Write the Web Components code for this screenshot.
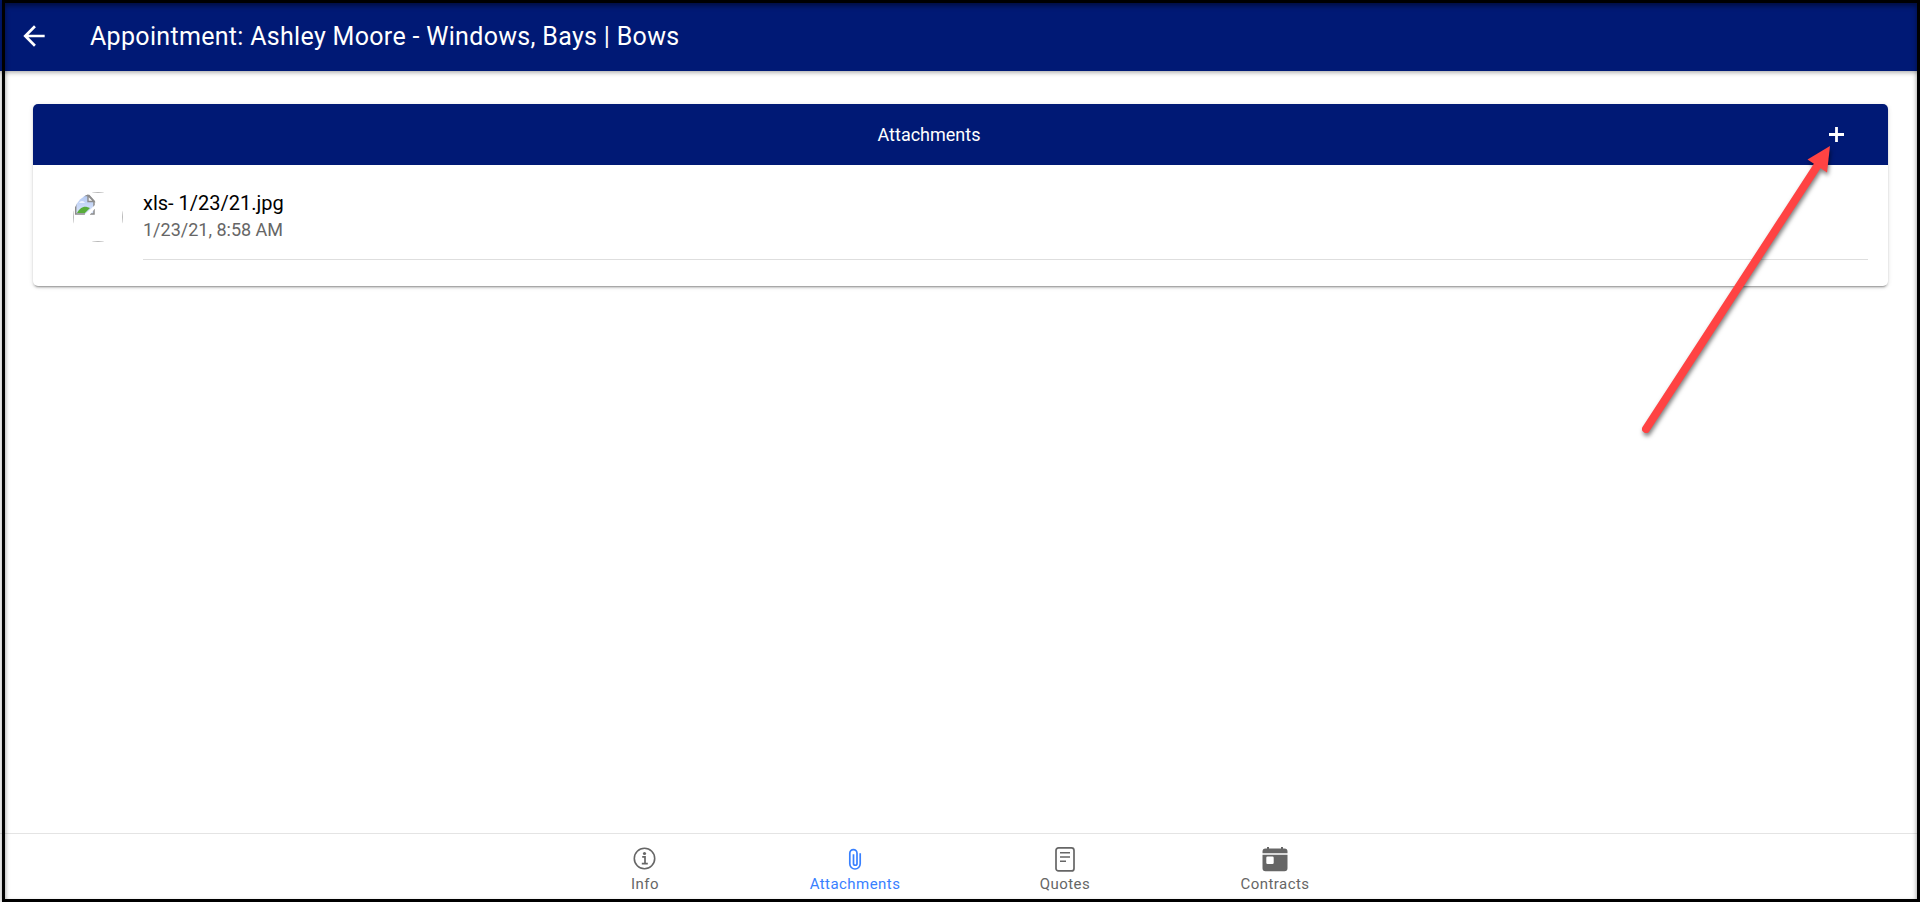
<!DOCTYPE html>
<html lang="en">
<head>
<meta charset="utf-8">
<meta name="viewport" content="width=device-width, initial-scale=1">
<title>Appointment</title>
<style>
html { background: #fff; }
body { margin: 0; font-family: Roboto, "Liberation Sans", sans-serif; color: #000; }
</style>
</head>
<body>
<appointment-page>
  <page-header slot="header">Appointment: Ashley Moore - Windows, Bays | Bows</page-header>
  <attachment-card heading="Attachments">
    <attachment-item>
      xls- 1/23/21.jpg
      <span slot="date">1/23/21, 8:58 AM</span>
    </attachment-item>
    <pointer-arrow slot="callout"></pointer-arrow>
  </attachment-card>
  <tab-bar slot="footer">
    <tab-link icon="info">Info</tab-link>
    <tab-link icon="clip" selected>Attachments</tab-link>
    <tab-link icon="quote">Quotes</tab-link>
    <tab-link icon="calendar">Contracts</tab-link>
  </tab-bar>
</appointment-page>

<script>
const define = (name, render) => customElements.define(name, class extends HTMLElement {
  constructor() {
    super();
    this.attachShadow({ mode: 'open' });
  }
  connectedCallback() {
    const template = document.createElement('template');
    template.innerHTML = render(this);
    this.shadowRoot.replaceChildren(template.content.cloneNode(true));
  }
});

define('appointment-page', () => `
  <style>
    :host { display: flex; flex-direction: column; min-height: 100vh; position: relative; }
    main { flex: 1; padding: 33px 32px 33px 33px; }
    .frame {
      position: absolute; inset: 0 0 0 2px; z-index: 5; pointer-events: none;
      border: 3px solid #000;
      box-shadow: inset 0 3px 5px rgba(0, 0, 0, .45), 0 0 5px rgba(0, 0, 0, .4);
    }
    .clip { position: absolute; inset: 0; overflow: hidden; pointer-events: none; z-index: 5; }
  </style>
  <slot name="header"></slot>
  <main><slot></slot></main>
  <slot name="footer"></slot>
  <div class="clip"><div class="frame"></div></div>
`);

define('page-header', () => `
  <style>
    :host { display: block; position: relative; z-index: 1; }
    header {
      box-sizing: border-box; height: 71px; padding: 0 20px 0 18px;
      display: flex; align-items: center; gap: 40px;
      background: #001975; color: #fff; box-shadow: 0 1px 5px rgba(0, 0, 0, .4);
    }
    button { width: 32px; height: 32px; padding: 0; border: 0; background: none; color: inherit; cursor: pointer; }
    svg { display: block; }
    h1 { margin: 0; padding-top: 2px; font-size: 25px; line-height: 32px; font-weight: 400; letter-spacing: .0125em; }
  </style>
  <header>
    <button type="button" aria-label="Back">
      <svg width="32" height="32" viewBox="0 0 24 24" fill="currentColor"><path d="M20 11H7.83l5.59-5.59L12 4l-8 8 8 8 1.41-1.41L7.83 13H20z"/></svg>
    </button>
    <h1><slot></slot></h1>
  </header>
`);

define('attachment-card', host => `
  <style>
    :host { display: block; }
    section {
      position: relative; border-radius: 5px; background: #fff;
      box-shadow: 0 3px 1px -2px rgba(0,0,0,.2), 0 2px 2px 0 rgba(0,0,0,.14), 0 1px 5px 0 rgba(0,0,0,.12);
    }
    header {
      height: 61px; padding: 0 27px 0 20px; display: flex; align-items: center; gap: 7px;
      border-radius: 5px 5px 0 0; background: #001975; color: #fff;
    }
    h2 { flex: 1; margin: 0; text-align: center; font-size: 18px; line-height: 24px; font-weight: 400; }
    button { width: 49px; height: 40px; padding: 0; border: 0; background: none; color: inherit; cursor: pointer; }
    svg { display: block; margin: auto; }
    .list { padding: 10px 20px 26px; }
  </style>
  <section>
    <header>
      <h2>${host.getAttribute('heading')}</h2>
      <button type="button" aria-label="Add attachment">
        <svg width="15" height="15" viewBox="0 0 15 15" fill="currentColor"><path d="M6.1 0h2.8v6.1H15v2.8H8.9V15H6.1V8.9H0V6.1h6.1z"/></svg>
      </button>
    </header>
    <div class="list"><slot></slot></div>
    <slot name="callout"></slot>
  </section>
`);

define('attachment-item', () => `
  <style>
    :host { display: flex; gap: 20px; padding-left: 20px; }
    svg { display: block; margin-top: 17px; }
    .text { flex: 1; padding: 15px 0 16px; border-bottom: 1px solid #dedede; }
    .name { font-size: 20px; line-height: 26px; }
    .date { font-size: 18px; line-height: 27px; color: #666; }
  </style>
  <svg width="50" height="50" viewBox="0 0 50 50" role="img" aria-label="Thumbnail unavailable">
    <defs>
      <clipPath id="round"><circle cx="25" cy="25" r="25"/></clipPath>
      <linearGradient id="sky" x2="0" y2="1"><stop stop-color="#b3c8f2"/><stop offset="1" stop-color="#dbe6fb"/></linearGradient>
    </defs>
    <g clip-path="url(#round)">
      <rect x=".5" y=".5" width="49" height="49" fill="none" stroke="#b8b8b8"/>
      <path d="M3 3h13l5 6v13H3z" fill="url(#sky)"/>
      <path d="M4 21c2-4 6-7 10-6l3 1-5 5z" fill="#58ad3a"/>
      <path d="M2.700 3v19H12M17 22h4V9l-5-5.500H3" fill="none" stroke="#8b8b8b" stroke-width="1.500"/>
      <path d="M15 3.500v6h6z" fill="#f5f5f5" stroke="#8b8b8b" stroke-width="1.400"/>
      <path d="M11.500 23L22 13v3.500L16.500 23z" fill="#fff"/>
      <path d="M6 11q1-2 3-2 2 0 3 2z" fill="#eef4ff"/>
    </g>
  </svg>
  <div class="text">
    <div class="name"><slot></slot></div>
    <div class="date"><slot name="date"></slot></div>
  </div>
`);

define('pointer-arrow', () => `
  <style>
    :host { display: block; position: absolute; top: 36px; right: 38px; z-index: 3; pointer-events: none; }
    svg { display: block; overflow: visible; filter: drop-shadow(1px 3px 2px rgba(0, 0, 0, .5)); }
  </style>
  <svg width="220" height="310" viewBox="0 0 220 310" fill="#ff4343" aria-hidden="true">
    <path d="M16 289L187.500 25.500" stroke="#ff4343" stroke-width="8" stroke-linecap="round"/>
    <path d="M200 6L177.500 19.500L197 32.500z"/>
  </svg>
`);

define('tab-bar', () => `
  <style>
    :host { display: block; }
    nav {
      box-sizing: border-box; height: 69px; display: flex; justify-content: center;
      border-top: 1px solid #e4e4e4; background: #fff;
    }
  </style>
  <nav aria-label="Appointment sections"><slot></slot></nav>
`);

const icons = {
  info: `<circle cx="13.500" cy="13.500" r="10.200" fill="none" stroke="currentColor" stroke-width="1.600"/>
    <circle cx="13.500" cy="8.500" r="1.600" fill="currentColor"/>
    <path d="M11.200 11.900h2.800v6.600M10.800 18.600h6" fill="none" stroke="currentColor" stroke-width="1.700"/>`,
  clip: `<path d="M19.200 8.300V18.800A5.200 5.200 0 0 1 8.800 18.800V8.200A3.600 3.600 0 0 1 16 8.200V18.500A1.750 1.750 0 0 1 12.500 18.500V9.200" fill="none" stroke="currentColor" stroke-width="1.700"/>`,
  quote: `<rect x="5" y="2.900" width="18" height="23" rx="2.500" fill="none" stroke="currentColor" stroke-width="1.700"/>
    <path d="M9 7.700h10M9 12h10M9 16.300h6" fill="none" stroke="currentColor" stroke-width="1.600"/>`,
  calendar: `<path d="M1.500 8.200V6.500a3 3 0 0 1 3-3H6V2h2v1.500h12V2h2v1.500h1.500a3 3 0 0 1 3 3v1.700z" fill="currentColor"/>
    <path fill-rule="evenodd" d="M1.500 9.700h25v13.500a3 3 0 0 1-3 3h-19a3 3 0 0 1-3-3zM6.500 11.500a1.200 1.200 0 0 0-1.200 1.200v5a1.200 1.200 0 0 0 1.200 1.200h5a1.200 1.200 0 0 0 1.200-1.200v-5a1.200 1.200 0 0 0-1.200-1.200z" fill="currentColor"/>`
};

define('tab-link', host => `
  <style>
    :host { display: block; flex: 0 1 210px; color: #666; }
    :host([selected]) { color: #3880ff; }
    a {
      display: flex; flex-direction: column; align-items: center;
      padding-top: 11px; color: inherit; text-decoration: none;
      font-size: 15px; line-height: 22px; letter-spacing: .03em;
    }
    svg { display: block; }
  </style>
  <a href="#${host.getAttribute('icon')}" ${host.hasAttribute('selected') ? 'aria-current="page"' : ''}>
    <svg width="28" height="28" viewBox="0 0 28 28" aria-hidden="true">${icons[host.getAttribute('icon')]}</svg>
    <slot></slot>
  </a>
`);
</script>
</body>
</html>
